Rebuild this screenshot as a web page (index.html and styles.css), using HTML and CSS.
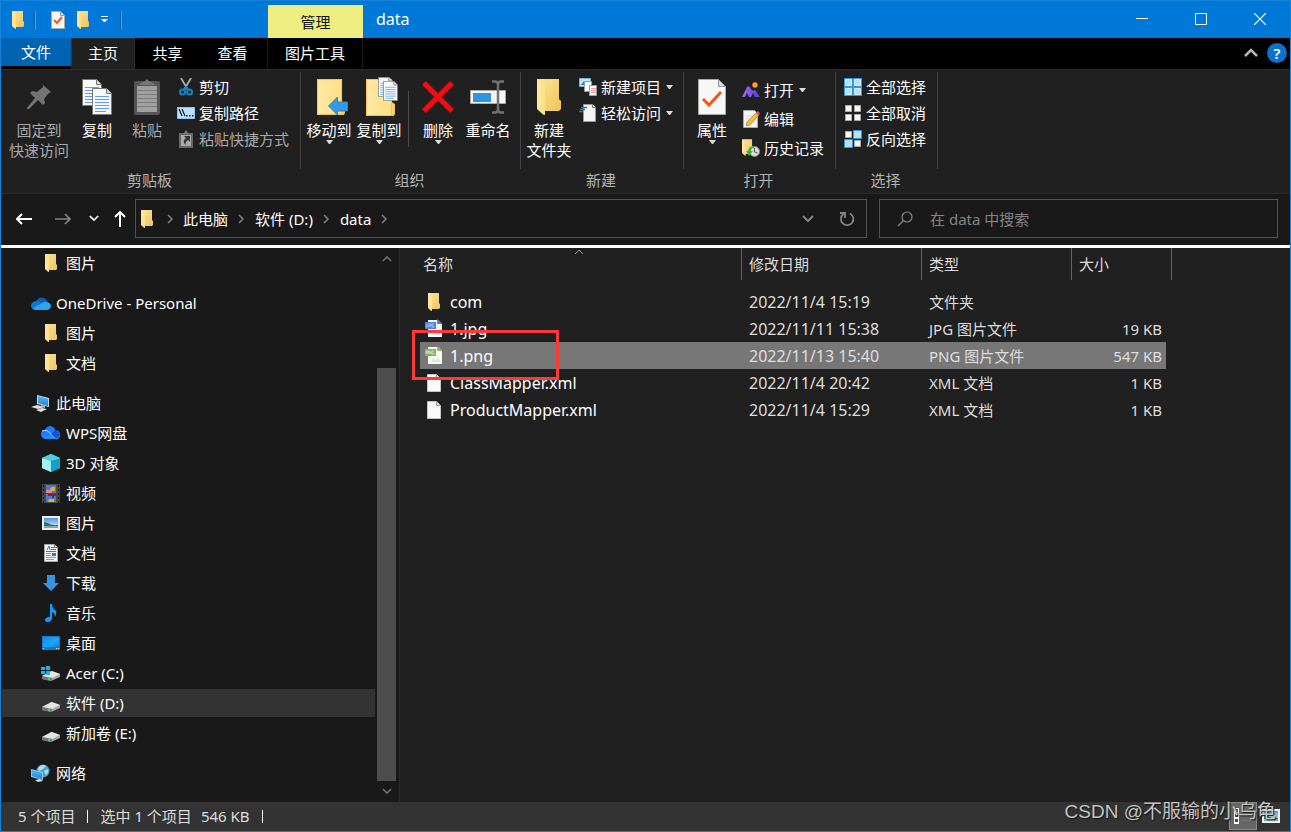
FILE: index.html
```html
<!DOCTYPE html>
<html lang="zh-CN">
<head>
<meta charset="utf-8">
<meta name="viewport" content="width=device-width, initial-scale=1">
<title>data</title>
<link rel="stylesheet" href="styles.css">
</head>
<body>
<svg class="defs" width="0" height="0" aria-hidden="true">
  <defs>
    <linearGradient id="gFold" x1="0" x2="1"><stop offset="0" stop-color="#ffe9a6"/><stop offset="1" stop-color="#ffdf85"/></linearGradient>
    <linearGradient id="gBack" x1="0" x2="1" y2="1"><stop offset="0" stop-color="#ffe398"/><stop offset="1" stop-color="#f0c55c"/></linearGradient>
    <linearGradient id="gBlue" x1="0" x2="0" y2="1"><stop offset="0" stop-color="#52b7f7"/><stop offset="1" stop-color="#1787dc"/></linearGradient>
    <linearGradient id="gHill" x1="0" x2="1"><stop offset="0" stop-color="#a06bf0"/><stop offset="1" stop-color="#4b3fd8"/></linearGradient>
    <linearGradient id="gDesk" x1="0" x2="1" y2="1"><stop offset="0" stop-color="#0f8de8"/><stop offset=".6" stop-color="#1ba4ff"/><stop offset="1" stop-color="#0c7fe0"/></linearGradient>
    <linearGradient id="gWps" x1="0" x2="1" y2="1"><stop offset="0" stop-color="#1767ff"/><stop offset="1" stop-color="#2b9bff"/></linearGradient>
    <linearGradient id="gSky" x1="0" x2="0" y2="1"><stop offset="0" stop-color="#4e94e0"/><stop offset="1" stop-color="#e6f3fb"/></linearGradient>
  </defs>
  <symbol id="folder" viewBox="0 0 12 18"><path d="M0 0h11v10l1 1v4l-1 1H4L0 14z" fill="url(#gBack)"/><path d="M0 1l4 2v15l-1-.3L0 15z" fill="url(#gFold)"/></symbol>
  <symbol id="checkdoc" viewBox="0 0 28 36"><path d="M.5.5h20l7 7v28H.5z" fill="#f7f7f7" stroke="#aaa"/><path d="M20.500.5v7h7z" fill="#ddd" stroke="#999"/><path d="M5 20l6 6L23 13" fill="none" stroke="#f1571c" stroke-width="3"/></symbol>
  <symbol id="page" viewBox="0 0 20 27"><path d="M.5.5h14l5 5v21H.5z" fill="#f8f8f8" stroke="#777"/><path d="M14.500.5v5h5" fill="#ddd" stroke="#777"/><path d="M3 8.500h14M3 11.500h14M3 14.500h14M3 17.500h14M3 20.500h14M3 23.500h11" stroke="#5b9ff0"/></symbol>
  <symbol id="drive" viewBox="0 0 18 12"><path d="M0 7l9-5 9 3v3l-9 4-9-2z" fill="#a8a8a8"/><path d="M0 7l10-5 8 3-8 4z" fill="#e4e4e4"/><path d="M0 7l10 2v3L0 10z" fill="#757575"/><path d="M6 9h2v2H6z" fill="#3fdc4c"/></symbol>
  <symbol id="tri" viewBox="0 0 7 4"><path d="M0 0h7L4 4H3z" fill="currentColor"/></symbol>
  <symbol id="chev" viewBox="0 0 6 10"><path d="M1 1l4 4-4 4" fill="none" stroke="currentColor" stroke-width="1.500"/></symbol>
  <symbol id="down" viewBox="0 0 12 8"><path d="M1 1l5 5 5-5" fill="none" stroke="currentColor" stroke-width="2"/></symbol>
  <symbol id="blank" viewBox="0 0 14 18"><path d="M.5.5h9l4 4v13H.5z" fill="#fafafa" stroke="#c4c4c4"/><path d="M9.500.5v4h4" fill="#ddd" stroke="#999"/></symbol>
  <symbol id="bigfolder" viewBox="0 0 30 37"><path d="M1 0h26v23l3 2v10l-1 2H1z" fill="#edc25b"/><path d="M2 1h24v35H2z" fill="url(#gFold)"/><path d="M27 24l2 2v9h-2z" fill="#f6d278"/></symbol>
  <symbol id="photo" viewBox="0 0 18 14"><path d="M0 0h18v14H0z" fill="#eee"/><path d="M2 2h14v10H2z" fill="url(#gSky)"/><path d="M2 6c4 0 6 4 14 3v3H2z" fill="#36705f"/><path d="M2 10h14v2H2z" fill="#83a8b5"/></symbol>
</svg>

<div class="window">
  <header class="titlebar">
    <div class="quick">
      <svg class="q-folder" width="12" height="18"><use href="#folder"/></svg>
      <i class="qsep"></i>
      <button class="plain" aria-label="属性"><svg width="14" height="18" viewBox="0 0 14 18"><path d="M.5.5h9l4 4v13H.5z" fill="#f7f7f7" stroke="#aaa"/><path d="M9.500.5v4h4" fill="#ddd" stroke="#999"/><path d="M3 9l3 3 5-6" fill="none" stroke="#f1571c" stroke-width="2"/></svg></button>
      <button class="plain" aria-label="新建文件夹"><svg width="12" height="18"><use href="#folder"/></svg></button>
      <button class="plain" aria-label="自定义快速访问工具栏"><svg width="7" height="7" viewBox="0 0 7 7"><path d="M0 0h7v1H0zM0 3h7L4 6H3z" fill="#fff"/></svg></button>
      <i class="qsep"></i>
    </div>
    <div class="context">管理</div>
    <h1 class="title">data</h1>
    <div class="controls">
      <button aria-label="最小化"><svg width="12" height="12"><path d="M0 5.500h12" stroke="#fff"/></svg></button>
      <button aria-label="最大化"><svg width="12" height="12"><path d="M.5.5h11v11H.5z" fill="none" stroke="#fff"/></svg></button>
      <button aria-label="关闭"><svg width="12" height="12"><path d="M0 0l12 12M12 0L0 12" stroke="#fff" stroke-width="1.200"/></svg></button>
    </div>
  </header>

  <nav class="tabs">
    <button class="tab file">文件</button>
    <button class="tab active">主页</button>
    <button class="tab">共享</button>
    <button class="tab">查看</button>
    <button class="tab tool">图片工具</button>
    <span class="tabs-end">
      <button class="plain" aria-label="折叠功能区"><svg width="14" height="9" viewBox="0 0 14 9"><path d="M1 8l6-6 6 6" fill="none" stroke="#b5b5b5" stroke-width="2.500"/></svg></button>
      <button class="help" aria-label="帮助">?</button>
    </span>
  </nav>

  <section class="ribbon">
    <div class="group clip">
      <div class="group-body">
        <button class="big wide dim"><span class="pic"><svg width="26" height="26" viewBox="0 0 26 26"><path d="M17 1l8 7-3 2-4 5 1 4-2 2-5-5-9 9H1v-1l8-10-5-5 2-2 5 1 6-5z" fill="#747476"/></svg></span>固定到<br>快速访问</button>
        <button class="big"><span class="pic"><svg width="31" height="37"><use href="#page" width="20" height="27"/><use href="#page" x="10" y="9" width="20" height="27"/></svg></span>复制</button>
        <button class="big dim"><span class="pic"><svg width="26" height="36" viewBox="0 0 26 36"><rect y="2" width="26" height="34" rx="2" fill="#555"/><path d="M3 7h20v26H3z" fill="#a0a0a0"/><path d="M3 11.500h20M3 15.500h20M3 19.500h20M3 23.500h20M3 27.500h20" stroke="#7d7d7d"/><path d="M5 6c1-3 5-2 8-6 3 4 7 3 8 6z" fill="#777"/></svg></span>粘贴</button>
        <div class="smalls">
          <button class="small"><span class="ico"><svg width="14" height="18" viewBox="0 0 14 18"><path d="M2 0l7 12M12 0L5 12" stroke="#a6b0b8" stroke-width="1.800"/><circle cx="3.500" cy="14" r="2.500" fill="none" stroke="#1683c6" stroke-width="2"/><circle cx="10.500" cy="14" r="2.500" fill="none" stroke="#1683c6" stroke-width="2"/><path d="M5 12l2-3 2 3" fill="none" stroke="#1683c6" stroke-width="2"/></svg></span>剪切</button>
          <button class="small"><span class="ico"><svg width="18" height="12" viewBox="0 0 18 12"><path d="M.5.5h17v11H.5z" fill="#b9e1ff" stroke="#8cc7f5"/><path d="M2 2l3 7M5 2l3 7" stroke="#111" stroke-width="1.200"/><path d="M9 8h1.500v1.500H9zM12 8h1.500v1.500H12zM15 8h1.500v1.500H15z" fill="#111"/></svg></span>复制路径</button>
          <button class="small dim"><span class="ico"><svg width="14" height="18" viewBox="0 0 14 18"><path d="M0 3h14v15H0z" fill="#686868"/><path d="M2 5h10v11H2z" fill="#aaa"/><path d="M4 4l3-4 3 4z" fill="#777"/><path d="M5 6h6v6L9 10c-2 1-3 3-2 5-3-2-3-5 0-7z" fill="#343434"/></svg></span>粘贴快捷方式</button>
        </div>
      </div>
      <div class="caption">剪贴板</div>
    </div>

    <div class="group org">
      <div class="group-body">
        <button class="big shifted"><span class="pic"><svg width="32" height="37"><use href="#bigfolder" width="29" height="36"/><path d="M12.500 27l9-9v5h10v9h-10v4z" fill="#369ae8" stroke="#2b80c6"/></svg></span>移动到<svg class="arrow" width="7" height="4"><use href="#tri"/></svg></button>
        <button class="big shifted"><span class="pic"><svg width="33" height="40"><use href="#bigfolder" y="2" width="30" height="37"/><use href="#page" x="13" width="15" height="20"/><use href="#page" x="18" y="4" width="15" height="20"/></svg></span>复制到<svg class="arrow" width="7" height="4"><use href="#tri"/></svg></button>
        <i class="inner-sep"></i>
        <button class="big"><span class="pic"><svg width="32" height="32" viewBox="0 0 32 32"><path d="M2 2l28 28M30 2L2 30" stroke="#a80b10" stroke-width="6"/><path d="M2 2l28 28M30 2L2 30" stroke="#ed0e17" stroke-width="4.500"/></svg></span>删除<svg class="arrow" width="7" height="4"><use href="#tri"/></svg></button>
        <button class="big"><span class="pic"><svg width="36" height="34" viewBox="0 0 36 34"><path d="M.5 10.500h35v13H.5z" fill="#f7f7f7" stroke="#aaa"/><path d="M3 13h18v9H3z" fill="#2f94e6"/><path d="M22 1.500h3q3 0 3 3v25q0 3-3 3h-3M34 1.500h-3q-3 0-3 3v25q0 3 3 3h3" fill="none" stroke="#717171" stroke-width="2.500"/></svg></span>重命名</button>
      </div>
      <div class="caption">组织</div>
    </div>

    <div class="group new">
      <div class="group-body">
        <button class="big"><span class="pic"><svg width="24" height="36"><use href="#folder"/></svg></span>新建<br>文件夹</button>
        <div class="smalls">
          <button class="small"><span class="ico"><svg width="18" height="18" viewBox="0 0 18 18"><path d="M.5.5h11v8H.5z" fill="#c4e8f7" stroke="#70b7d8"/><path d="M2 7l3-4 3 4z" fill="#2a8091"/><path d="M5.500 3.500h7v10h-7z" fill="#fff" stroke="#999"/><path d="M10.500 7.500h7v10h-7z" fill="#fff" stroke="#999"/><path d="M12 10.500h5M12 12.500h5M12 14.500h5" stroke="#e99"/></svg></span>新建项目<svg class="side-arrow" width="7" height="4"><use href="#tri"/></svg></button>
          <button class="small"><span class="ico"><svg width="18" height="18" viewBox="0 0 18 18"><path d="M4.500.5h9l3 3v14h-12z" fill="#f5f5f5" stroke="#999"/><path d="M13.500.5v3h3" stroke="#777" fill="#ddd"/><path d="M2 3.500h6M1 5.500h5M0 7.500h4" stroke="#2975ad" stroke-width="1.300"/></svg></span>轻松访问<svg class="side-arrow" width="7" height="4"><use href="#tri"/></svg></button>
        </div>
      </div>
      <div class="caption">新建</div>
    </div>

    <div class="group open">
      <div class="group-body">
        <button class="big"><span class="pic"><svg width="28" height="36"><use href="#checkdoc"/></svg></span>属性<svg class="arrow" width="7" height="4"><use href="#tri"/></svg></button>
        <div class="smalls tall">
          <button class="small"><span class="ico"><svg width="18" height="16" viewBox="0 0 18 16"><path d="M0 15L5 5q2-2 4 2l2 2q2-2 3 0l4 6h-5l-2-4-2 4H7l-2-4-2 4z" fill="url(#gHill)"/><circle cx="13" cy="3" r="2.700" fill="#ffa21a"/></svg></span>打开<svg class="side-arrow" width="7" height="4"><use href="#tri"/></svg></button>
          <button class="small"><span class="ico"><svg width="17" height="18" viewBox="0 0 17 18"><path d="M.5.5h11l3 3v14H.5z" fill="#f5f5f5" stroke="#aaa"/><path d="M3 6h8M3 9h6M3 12h4" stroke="#d4d4d4"/><path d="M13 3l3 2L7 15l-4 1 1-4z" fill="#f5bc39" stroke="#a87928" stroke-width=".6"/><path d="M13 3l3 2 1-2-2-2z" fill="#cf4b54"/></svg></span>编辑</button>
          <button class="small"><span class="ico"><svg width="18" height="18" viewBox="0 0 18 18"><use href="#folder" width="11" height="17"/><circle cx="12.500" cy="12.500" r="5" fill="#ddd" stroke="#888"/><path d="M12.500 9v4l3 1" fill="none" stroke="#555"/><path d="M12 7q-5 0-6 5H4l3 5 4-5H9q0-3 3-3z" fill="#36b83c"/></svg></span>历史记录</button>
        </div>
      </div>
      <div class="caption">打开</div>
    </div>

    <div class="group select">
      <div class="group-body">
        <div class="smalls">
          <button class="small"><span class="ico"><svg width="18" height="18" viewBox="0 0 18 18"><path d="M0 0h18v18H0z" fill="#3296e6"/><path d="M1.500 1.500h6v6h-6zM10.500 1.500h6v6h-6zM1.500 10.500h6v6h-6zM10.500 10.500h6v6h-6z" fill="#b6e0ff" stroke="#d7eeff"/></svg></span>全部选择</button>
          <button class="small"><span class="ico"><svg width="18" height="18" viewBox="0 0 18 18"><path d="M1.500 1.500h6v6h-6zM10.500 1.500h6v6h-6zM1.500 10.500h6v6h-6zM10.500 10.500h6v6h-6z" fill="#f8f8f8" stroke="#aaa"/></svg></span>全部取消</button>
          <button class="small"><span class="ico"><svg width="18" height="18" viewBox="0 0 18 18"><path d="M1.500 1.500h6v6h-6zM10.500 10.500h6v6h-6z" fill="#f8f8f8" stroke="#aaa"/><path d="M9.500.5h8v8h-8zM.5 9.500h8v8h-8z" fill="#b6e0ff" stroke="#3296e6"/></svg></span>反向选择</button>
        </div>
      </div>
      <div class="caption">选择</div>
    </div>
  </section>

  <section class="address">
    <div class="history">
      <button class="plain" aria-label="后退"><svg width="16" height="12" viewBox="0 0 16 12"><path d="M1 6h15M6 1L1 6l5 5" fill="none" stroke="#fff" stroke-width="2"/></svg></button>
      <button class="plain" aria-label="前进"><svg width="16" height="12" viewBox="0 0 16 12"><path d="M0 6h15M10 1l5 5-5 5" fill="none" stroke="#858585" stroke-width="1.600"/></svg></button>
      <button class="plain" aria-label="最近位置"><svg width="10" height="7"><use href="#down"/></svg></button>
      <button class="plain" aria-label="上移"><svg width="12" height="16" viewBox="0 0 12 16"><path d="M6 1v15M1 6l5-5 5 5" fill="none" stroke="#fff" stroke-width="2"/></svg></button>
    </div>
    <div class="path">
      <svg width="12" height="18"><use href="#folder"/></svg>
      <svg class="chev" width="6" height="10"><use href="#chev"/></svg>
      <a href="#pc">此电脑</a>
      <svg class="chev" width="6" height="10"><use href="#chev"/></svg>
      <a href="#d">软件 (D:)</a>
      <svg class="chev" width="6" height="10"><use href="#chev"/></svg>
      <a href="#data">data</a>
      <svg class="chev" width="6" height="10"><use href="#chev"/></svg>
      <span class="path-end">
        <button class="plain" aria-label="以前的位置"><svg width="12" height="8"><use href="#down"/></svg></button>
        <button class="plain" aria-label="刷新"><svg width="16" height="16" viewBox="0 0 16 16"><path d="M11 2.500A6.200 6.200 0 1 1 4.500 3M1 2h5v5" fill="none" stroke="#858585" stroke-width="1.800"/></svg></button>
      </span>
    </div>
    <label class="search">
      <svg width="16" height="16" viewBox="0 0 16 16"><circle cx="10" cy="6" r="5" fill="none" stroke="#858585" stroke-width="1.200"/><path d="M6.500 9.500L1 15" stroke="#858585" stroke-width="1.200"/></svg>
      <input type="search" placeholder="在 data 中搜索" aria-label="在 data 中搜索">
    </label>
  </section>

  <main class="content">
    <aside class="sidebar">
      <nav class="tree">
        <div class="branch">
          <a class="child" href="#"><span class="ico"><svg width="12" height="18"><use href="#folder"/></svg></span>图片</a>
        </div>
        <div class="branch">
          <a href="#"><span class="ico"><svg width="20" height="13" viewBox="0 0 20 13"><path d="M5 4q3-5 8-3 3 1 3.500 4L10 9z" fill="#0f5fb5"/><path d="M4 13Q0 12 0 8.500T5 4q3 0 6 3l-3 6z" fill="#1177d4"/><path d="M4 13q-2-1-2-2l9-5q2-2 5-1 4 1 4 4t-4 4z" fill="#2aa5ec"/></svg></span>OneDrive - Personal</a>
          <a class="child" href="#"><span class="ico"><svg width="12" height="18"><use href="#folder"/></svg></span>图片</a>
          <a class="child" href="#"><span class="ico"><svg width="12" height="18"><use href="#folder"/></svg></span>文档</a>
        </div>
        <div class="branch">
          <a href="#pc"><span class="ico"><svg width="19" height="18" viewBox="0 0 19 18"><path d="M6 1l12 3v9L6 10z" fill="#c5d4de"/><path d="M7 2l10 3v7L7 9z" fill="url(#gBlue)"/><path d="M10 11l4 1v2l-4-1z" fill="#aaa"/><path d="M0 13l6-2 7 2-6 2zM5 16l6-2 5 1-6 3z" fill="#dce1e3"/></svg></span>此电脑</a>
          <a class="child" href="#"><span class="ico"><svg width="19" height="14" viewBox="0 0 19 14"><path d="M4 13q-4-1-4-5t4-4q3-6 8-3 2 1 2 3 5 0 5 5t-6 4z" fill="url(#gWps)"/><path d="M1 5q5-2 8 2t7 6" fill="none" stroke="#8cc6ff" stroke-width="1.200"/><path d="M10 8l4-4q4 0 5 4-1 4-4 5z" fill="#1552d8"/></svg></span>WPS网盘</a>
          <a class="child" href="#"><span class="ico"><svg width="18" height="18" viewBox="0 0 18 18"><path d="M0 4l9-4 9 4v10l-9 4-9-4z" fill="#35c7db"/><path d="M0 4l9 3v11l-9-4z" fill="#a7eef0"/><path d="M9 7l9-3v10l-9 4z" fill="#11a2c8"/><path d="M0 4l9-4 9 4-9 3z" fill="#4ed1dd"/></svg></span>3D 对象</a>
          <a class="child" href="#"><span class="ico"><svg width="18" height="19" viewBox="0 0 18 19"><path d="M0 0h18v19H0z" fill="#484848"/><path d="M4 1h10v8H4zM4 10h10v8H4z" fill="#4779d5"/><path d="M4 6h4V4h2v5H4z" fill="#d98592"/><path d="M9 3h4v4H9zM7 15h5v3H6z" fill="#e2af20"/><path d="M6 10h8v2h-2v2h-2v-2H6z" fill="#881f28"/><path d="M1.500 1v18M16.500 1v18" stroke="#151515" stroke-dasharray="2"/></svg></span>视频</a>
          <a class="child" href="#"><span class="ico"><svg width="18" height="14"><use href="#photo"/></svg></span>图片</a>
          <a class="child" href="#"><span class="ico"><svg width="14" height="18" viewBox="0 0 14 18"><path d="M.5.5h10l3 3v14H.5z" fill="#f5f5f5" stroke="#aaa"/><path d="M10.500.5v3h3" fill="none" stroke="#777"/><path d="M3 6l2-4 1 4M7 3.500h3M7 5.500h5M2 7.500h10" fill="none" stroke="#1b8ac7"/><path d="M8 9h4v3H8z" fill="#387aab"/><path d="M2 9.500h5M2 11.500h5M2 13.500h10M2 15.500h8" stroke="#999"/></svg></span>文档</a>
          <a class="child" href="#"><span class="ico"><svg width="16" height="17" viewBox="0 0 16 17"><path d="M4 0h8v8h4l-8 8-8-8h4z" fill="#3794e1"/></svg></span>下载</a>
          <a class="child" href="#"><span class="ico"><svg width="12" height="18" viewBox="0 0 12 18"><path d="M5 0h2q0 4 4 7 1 2-1 6 0-4-3-5v6q0 4-4 4-3 0-3-2t3-3h2z" fill="#0a9cff"/></svg></span>音乐</a>
          <a class="child" href="#"><span class="ico"><svg width="18" height="14" viewBox="0 0 18 14"><path d="M0 0h18v14H0z" fill="#0d77cc"/><path d="M1 1h16v10H1z" fill="url(#gDesk)"/><path d="M1 12h1v1H1zM14 12h1v1h-1zM16 12h1v1h-1z" fill="#fff"/></svg></span>桌面</a>
          <a class="child" href="#"><span class="ico"><svg width="19" height="15" viewBox="0 0 19 15"><use href="#drive" x="1" y="3" width="18" height="12"/><path d="M0 1h4v3H0zM5 0h4v4H5zM0 5h4v3H0zM5 5h4v4H5z" fill="#14b4ec"/></svg></span>Acer (C:)</a>
          <a class="child current" href="#d"><span class="ico low"><svg width="18" height="12"><use href="#drive"/></svg></span>软件 (D:)</a>
          <a class="child" href="#"><span class="ico low"><svg width="18" height="12"><use href="#drive"/></svg></span>新加卷 (E:)</a>
        </div>
        <div class="branch">
          <a href="#"><span class="ico"><svg width="19" height="18" viewBox="0 0 19 18"><circle cx="12" cy="7" r="6.500" fill="#4ba3ce"/><path d="M7 4q4-5 8-2l-3 3-4 2zM13 7l4-2q1 4-2 6z" fill="#b9dce8"/><path d="M0 5l12 3v8L0 13z" fill="#8fc4e4"/><path d="M1 6l10 3v6L1 12z" fill="url(#gBlue)"/><path d="M4 16l5-1 3 2-5 1z" fill="#dedede"/></svg></span>网络</a>
        </div>
      </nav>
      <div class="scrollbar" aria-hidden="true">
        <svg class="flip" width="10" height="7"><use href="#down"/></svg>
        <div class="thumb"></div>
        <svg width="10" height="7"><use href="#down"/></svg>
      </div>
    </aside>

    <section class="files">
      <svg class="sort" width="10" height="6" viewBox="0 0 10 6"><path d="M1 5l4-4 4 4" fill="none" stroke="#999"/></svg>
      <table>
        <colgroup><col class="c-name"><col class="c-date"><col class="c-type"><col class="c-size"></colgroup>
        <thead><tr><th>名称</th><th>修改日期</th><th>类型</th><th>大小</th></tr></thead>
        <tbody>
          <tr><td><span class="name"><span class="ico"><svg width="12" height="18"><use href="#folder"/></svg></span>com</span></td><td class="date">2022/11/4 15:19</td><td>文件夹</td><td></td></tr>
          <tr><td><span class="name"><span class="ico"><svg width="18" height="19" viewBox="0 0 18 19"><path d="M3 1h10l4 4v13H3z" fill="#f5f9ff"/><path d="M12 0l5 5h-5z" fill="#4a7dd5"/><path d="M0 3h11v7H0z" fill="#4c83dc"/><path d="M2 5v3H1M4 8V5h2v2H4M9 5H7v3h2V7" fill="none" stroke="#b9d1ff" stroke-width=".8"/><path d="M6 16l3-4 2 2 2-2 3 4z" fill="#d6e3fa"/></svg></span>1.jpg</span></td><td class="date">2022/11/11 15:38</td><td>JPG 图片文件</td><td>19 KB</td></tr>
          <tr class="selected"><td><span class="name"><span class="ico"><svg width="18" height="19" viewBox="0 0 18 19"><path d="M3 1h10l4 4v13H3z" fill="#f6fbf3"/><path d="M12 0l5 5h-5z" fill="#8bb46f"/><path d="M0 3h11v7H0z" fill="#88b266"/><path d="M1 8V5h2v2H1M4 8V5l2 3V5M9 5H7v3h2V7" fill="none" stroke="#d5eac8" stroke-width=".8"/><path d="M6 16l3-4 2 2 2-2 3 4z" fill="#dce9d5"/></svg></span>1.png</span></td><td class="date">2022/11/13 15:40</td><td>PNG 图片文件</td><td>547 KB</td></tr>
          <tr><td><span class="name"><span class="ico"><svg width="14" height="18"><use href="#blank"/></svg></span>ClassMapper.xml</span></td><td class="date">2022/11/4 20:42</td><td>XML 文档</td><td>1 KB</td></tr>
          <tr><td><span class="name"><span class="ico"><svg width="14" height="18"><use href="#blank"/></svg></span>ProductMapper.xml</span></td><td class="date">2022/11/4 15:29</td><td>XML 文档</td><td>1 KB</td></tr>
        </tbody>
      </table>
      <div class="mark"></div>
    </section>
  </main>

  <footer class="status">
    <span>5 个项目</span><i></i><span>选中 1 个项目</span><span class="size">546 KB</span><i></i>
    <div class="views">
      <button class="on" aria-label="详细信息"><svg width="18" height="16" viewBox="0 0 18 16"><path d="M0 0h5v16H0z" fill="#fff"/><path d="M1 1h3v3H1z" fill="#486d7c"/><path d="M1 6h3v3H1z" fill="#444"/><path d="M1 11h3v3H1z" fill="#8b2f20"/><path d="M7 2.500h4M12 2.500h5M7 7.500h4M12 7.500h5M7 12.500h4M12 12.500h5" stroke="#777"/></svg></button>
      <button aria-label="大缩略图"><svg width="18" height="14"><use href="#photo"/></svg></button>
    </div>
    <div class="watermark">CSDN @不服输的小乌龟</div>
  </footer>
</div>
</body>
</html>
```
FILE: styles.css
```css
* { box-sizing: border-box; }
body {
  margin: 0;
  font: 15px/20px "Noto Sans", "Noto Sans CJK SC", sans-serif;
  color: #fff;
  background: #191919;
}
button, input { font: inherit; color: inherit; }
button { margin: 0; padding: 0; border: 0; background: none; }
a { color: inherit; text-decoration: none; }
svg { display: block; flex: none; }
.defs { position: absolute; }
.plain { display: flex; align-items: center; justify-content: center; }

.window {
  display: flex;
  flex-direction: column;
  min-height: 100vh;
  border: 1px solid #1683d8;
}

/* Title bar */
.titlebar { display: flex; height: 37px; background: #0078d7; }
.quick { display: flex; align-items: center; width: 267px; padding-left: 11px; }
.qsep { width: 2px; height: 18px; margin-left: 10px; background: #065ca3; border-right: 1px solid #4ba3e8; }
.quick .plain { margin-left: 12px; }
.quick .qsep + .plain { margin-left: 15px; }
.quick .plain + .qsep { margin-left: 12px; }
.context {
  display: flex;
  align-items: center;
  justify-content: center;
  width: 95px;
  margin-top: 4px;
  background: #eeee80;
  color: #111;
}
.title { margin: 0 0 0 13px; font-size: 16px; line-height: 36px; font-weight: 400; }
.controls { display: flex; margin-left: auto; padding: 0 1px 1px 0; }
.controls button { display: flex; align-items: center; justify-content: center; width: 59px; }

/* Tabs */
.tabs { display: flex; align-items: flex-start; height: 31px; background: #000; }
.tab { width: 65px; height: 31px; padding-bottom: 2px; }
.file { width: 70px; height: 28px; padding: 0; background: #0063b1; }
.active { width: 64px; background: #202020; border: 1px solid #2e2e2e; border-bottom: 0; }
.tool { width: 96px; margin-left: 2px; border: 1px solid #1b1b1b; border-width: 0 1px; }
.tabs-end { display: flex; align-items: center; gap: 9px; height: 29px; margin-left: auto; padding-right: 3px; }
.help { width: 20px; height: 20px; border-radius: 50%; background: #0c70cd; font-weight: 600; line-height: 20px; }

/* Ribbon */
.ribbon { display: flex; height: 125px; padding-top: 2px; background: #202020; border-top: 1px solid #2b2b2b; border-bottom: 1px solid #2b2b2b; }
.group-body { display: flex; height: 97px; padding: 2px 0 0 3px; border-right: 1px solid #444; }
.caption { padding-right: 3px; color: #b4b4b4; text-align: center; line-height: 23px; }
.clip { width: 300px; }
.clip .group-body { padding-left: 5px; }
.org { width: 220px; }
.new { width: 163px; }
.open { width: 152px; }
.select { width: 102px; }
.big { display: flex; flex-direction: column; align-items: center; width: 50px; white-space: nowrap; }
.big.wide { width: 66px; }
.big .pic { display: flex; align-items: center; justify-content: center; width: 50px; height: 46px; }
.shifted .pic { padding-left: 5px; }
.arrow { color: #ddd; }
.dim { color: #aaa; }
.inner-sep { width: 1px; height: 56px; margin: 17px 4px 0; background: #4d4d4d; }
.smalls { padding-left: 5px; }
.small { display: flex; align-items: center; height: 26px; white-space: nowrap; }
.tall { padding-top: 1px; }
.tall .small { height: 29px; }
.small .ico { display: flex; align-items: center; justify-content: center; width: 18px; margin-right: 4px; }
.side-arrow { margin-left: 5px; color: #ddd; }

/* Address bar */
.address { display: flex; height: 51px; padding: 5px 12px 7px 15px; }
.history { display: flex; align-items: center; width: 119px; gap: 18px; }
.history .plain { min-width: 10px; }
.history .plain:first-child { margin-right: 5px; }
.history .plain:last-child { margin-left: -3px; }
.path { display: flex; align-items: center; flex: 725 1 0; padding-left: 5px; border: 1px solid #535353; }
.chev { margin: 0 11px 0 10px; color: #858585; }
.path svg:first-child + .chev { margin-left: 14px; margin-right: 10px; }
.path-end { display: flex; margin-left: auto; color: #858585; }
.path-end .plain { width: 39px; }
.search { display: flex; align-items: center; flex: 380 1 0; margin-left: 12px; padding-left: 17px; border: 1px solid #535353; }
.search input { flex: 1; min-width: 0; margin-left: 17px; padding: 0; border: 0; outline: 0; background: none; }
.search input::placeholder { color: #858585; opacity: 1; }

/* Content */
.content { display: flex; flex: 1; border-top: 3px solid #fff; }
.sidebar { display: flex; width: 399px; border-right: 1px solid #2b2b2b; }
.tree { flex: 1; }
.branch { margin-bottom: 10px; }
.tree a { display: flex; align-items: center; height: 30px; padding-left: 29px; }
.tree .child { padding-left: 39px; }
.tree .ico { display: flex; align-items: center; justify-content: center; width: 21px; margin-right: 5px; }
.tree .low { padding-top: 5px; }
.tree .current { margin-left: 1px; padding-left: 38px; background: #333; border: 1px solid #191919; border-width: 1px 0; }
.scrollbar { display: flex; flex-direction: column; align-items: center; width: 19px; margin: 0 3px 0 2px; padding: 7px 0; color: #6f6f6f; }
.scrollbar .flip { transform: scaleY(-1); }
.thumb { width: 19px; flex: 1; margin: 106px 0 7px; background: #4d4d4d; }

.files { position: relative; flex: 1; background: #202020; padding-left: 20px; }
.sort { position: absolute; left: 174px; top: 1px; }
table { width: 752px; table-layout: fixed; border-collapse: separate; border-spacing: 0; color: #dedede; }
.c-name { width: 322px; }
.c-date { width: 180px; }
.c-type { width: 150px; }
.c-size { width: 100px; }
th { height: 32px; padding: 0 0 0 7px; border-right: 1px solid #636363; font-weight: 400; text-align: left; }
th:first-child { padding-left: 3px; }
tbody::before { content: ""; display: block; height: 8px; }
td { height: 27px; padding: 0 0 0 7px; white-space: nowrap; }
td:first-child { padding-left: 4px; color: #fff; }
td:last-child { padding-right: 4px; border-right: 6px solid transparent; background-clip: padding-box; text-align: right; }
.name, .date { font-size: 16px; }
.name { display: flex; align-items: center; }
.name .ico { display: flex; align-items: center; justify-content: center; width: 20px; margin-right: 6px; }
.selected td { background-color: #777; }
.mark { position: absolute; left: 12px; top: 82px; width: 147px; height: 50px; border: 3px solid #fb3a3a; }

/* Status bar */
.status { position: relative; display: flex; align-items: center; height: 29px; padding: 0 0 1px 17px; background: #333; color: #dedede; }
.status i { width: 1px; height: 13px; margin: 0 12px; background: #fff; }
.size { margin-left: 9px; }
.views { display: flex; height: 28px; margin-left: auto; padding-right: 5px; }
.views button { display: flex; align-items: center; justify-content: center; width: 28px; }
.views .on { background: #666; border: 1px solid #888; }
.watermark { position: absolute; right: 14px; top: -3px; font: 19px/26px "Liberation Sans", "Noto Sans CJK SC", sans-serif; color: #c4c4c4; text-shadow: 1px 1px 1px #111; white-space: nowrap; }
```
